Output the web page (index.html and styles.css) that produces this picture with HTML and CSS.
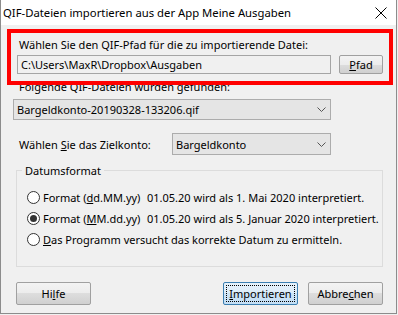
FILE: index.html
```html
<!DOCTYPE html>
<html lang="de">
<head>
<meta charset="utf-8">
<title>QIF-Dateien importieren</title>
<link rel="stylesheet" href="styles.css">
</head>
<body>
<div class="window">
  <div class="titlebar">
    <span class="title">QIF-Dateien importieren aus der App Meine Ausgaben</span>
    <svg class="close" width="12" height="12" viewBox="0 0 12 12"><path d="M0.5 0.5 L11.5 11.5 M11.5 0.5 L0.5 11.5" stroke="#000" stroke-width="1" fill="none"/></svg>
  </div>
  <div class="content">
    <div class="label label-path">Wählen Sie den QIF-Pfad für die zu importierende Datei:</div>
    <div class="path-row">
      <div class="textfield">C:\Users\MaxR\Dropbox\Ausgaben</div>
      <button class="btn btn-pfad"><u>P</u>fad</button>
    </div>
    <div class="label label-files">Folgende QIF-Dateien wurden gefunden:</div>
    <div class="combo combo-file">
      <span>Bargeldkonto-20190328-133206.qif</span>
      <svg class="chev" width="9" height="5" viewBox="0 0 9 5"><path d="M0.5 0.5 L4.5 4.5 L8.5 0.5" stroke="#555" stroke-width="1" fill="none"/></svg>
    </div>
    <div class="target-row">
      <span class="label label-target">Wählen <u>S</u>ie das Zielkonto:</span>
      <div class="combo combo-target">
        <span>Bargeldkonto</span>
        <svg class="chev" width="9" height="5" viewBox="0 0 9 5"><path d="M0.5 0.5 L4.5 4.5 L8.5 0.5" stroke="#555" stroke-width="1" fill="none"/></svg>
      </div>
    </div>
    <fieldset class="group">
      <legend>Datumsformat</legend>
      <div class="radio-row">
        <span class="radio"></span>
        <span class="fmt">Format (<u>d</u>d.MM.yy)</span>
        <span class="desc">01.05.20 wird als 1. Mai 2020 interpretiert.</span>
      </div>
      <div class="radio-row">
        <span class="radio checked"></span>
        <span class="fmt">Format (<u>M</u>M.dd.yy)</span>
        <span class="desc">01.05.20 wird als 5. Januar 2020 interpretiert.</span>
      </div>
      <div class="radio-row">
        <span class="radio"></span>
        <span class="fmt-long"><u>D</u>as Programm versucht das korrekte Datum zu ermitteln.</span>
      </div>
    </fieldset>
    <div class="buttons">
      <button class="btn btn-dlg">Hi<u>l</u>fe</button>
      <span class="spacer"></span>
      <button class="btn btn-dlg btn-default"><span class="focus"><u>I</u>mportieren</span></button>
      <button class="btn btn-dlg">Abbre<u>c</u>hen</button>
    </div>
  </div>
  <div class="highlight"></div>
</div>
</body>
</html>
```

FILE: styles.css
```css
* { box-sizing: border-box; }
html, body {
  margin: 0;
  padding: 0;
  background: #f0f0f0;
}
body {
  font-family: "Noto Sans", "Open Sans", sans-serif;
  font-size: 11px;
  line-height: 15px;
  color: #000;
}
.window {
  position: relative;
  width: 397px;
  height: 314px;
  background: #f0f0f0;
  border-left: 1px solid #8c8c8c;
  border-right: 1px solid #8c8c8c;
  border-bottom: 1px solid #8c8c8c;
  overflow: hidden;
}
.titlebar {
  height: 25px;
  background: #fff;
  display: flex;
  align-items: center;
  padding-left: 3px;
  padding-right: 9px;
  margin-left: -1px;
}
.title {
  flex: 1;
  font-size: 11.3px;
  white-space: nowrap;
  padding-bottom: 1px;
}
.close { display: block; }
.content {
  display: flex;
  flex-direction: column;
  padding-left: 12px;
}
.label { white-space: nowrap; }
.label-path { margin-top: 12px; margin-left: 6px; }
.path-row {
  display: flex;
  align-items: center;
  margin-top: 3px;
  margin-left: 4px;
}
.textfield {
  width: 314px;
  height: 19px;
  border: 1px solid #a5a5a5;
  background: #f0f0f0;
  padding-left: 3px;
  line-height: 17px;
  white-space: nowrap;
}
.btn {
  font-family: inherit;
  font-size: 11px;
  color: #000;
  border: 1px solid #a0a0a0;
  border-radius: 2px;
  background: linear-gradient(#f3f3f3, #ececec 50%, #dddddd 50%, #d0d0d0);
  padding: 0;
  line-height: 15px;
  cursor: default;
}
.btn-pfad {
  width: 44px;
  height: 19px;
  margin-left: 8px;
}
.label-files { margin-top: 5px; margin-left: 6px; }
.combo {
  display: flex;
  align-items: center;
  justify-content: space-between;
  height: 21px;
  border: 1px solid #acacac;
  background: #e5e5e5;
  padding-left: 3px;
  padding-right: 4px;
  white-space: nowrap;
}
.combo-file {
  width: 318px;
  margin-top: 5px;
}
.chev { display: block; }
.target-row {
  display: flex;
  align-items: center;
  margin-top: 13px;
}
.label-target {
  width: 159px;
  padding-left: 6px;
}
.combo-target {
  width: 159px;
  height: 22px;
}
.group {
  margin: 8px 0 0 3px;
  width: 367px;
  border: 1px solid #dcdcdc;
  padding: 9px 0 16px 10px;
  min-width: 0;
}
.group legend {
  padding: 0 3px;
  margin-left: -5px;
  line-height: 15px;
}
.radio-row {
  display: flex;
  align-items: center;
  height: 21px;
  white-space: nowrap;
}
.radio {
  width: 13px;
  height: 13px;
  border: 1px solid #333;
  border-radius: 50%;
  background: #fff;
  margin-right: 3px;
  position: relative;
  flex: none;
}
.radio.checked::after {
  content: "";
  position: absolute;
  left: 2px;
  top: 2px;
  width: 7px;
  height: 7px;
  border-radius: 50%;
  background: #333;
}
.fmt { width: 104px; }
.buttons {
  display: flex;
  margin-top: 15px;
  margin-left: 3px;
  width: 367px;
  gap: 10px;
}
.spacer { flex: 1; }
.btn-dlg {
  width: 75px;
  height: 23px;
}
.btn-default {
  border-color: #3c7fb1;
  background: linear-gradient(#e5f1fb, #dcecf9 50%, #cde4f7 50%, #c4dff5);
  padding: 2px;
}
.btn-default .focus {
  display: flex;
  align-items: center;
  justify-content: center;
  height: 100%;
  border: 1px dotted #000;
}
.highlight {
  position: absolute;
  left: 6px;
  top: 29px;
  width: 386px;
  height: 56px;
  border: 4px solid #ff0000;
  pointer-events: none;
}
```
